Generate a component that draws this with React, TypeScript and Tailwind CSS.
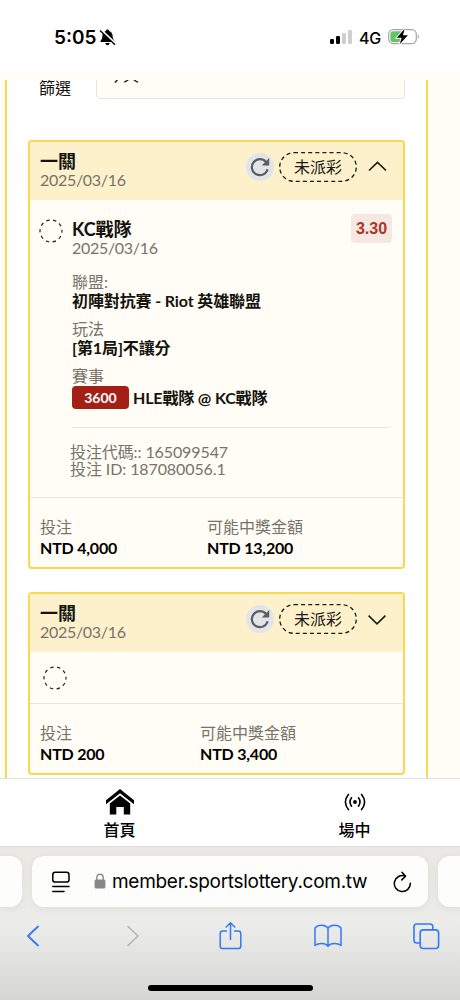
import React from "react";

const LATO = "font-['Lato','Noto_Sans_CJK_TC',sans-serif]";

function RefreshBadge() {
  return (
    <span className="flex h-[28px] w-[28px] items-center justify-center rounded-full bg-[#e3e4e7]">
      <svg width="20" height="20" viewBox="0 0 20 20" fill="none">
        <path d="M16 5A8 8 0 1 0 17.6 12.3" stroke="#5d5e61" strokeWidth="2.2" />
        <path d="M19.2 1V8.4H11.8Z" fill="#5d5e61" />
      </svg>
    </span>
  );
}

function PendingRing() {
  return (
    <svg className="shrink-0" width="24" height="24" viewBox="0 0 24 24" fill="none">
      <circle cx="12" cy="12" r="11" stroke="#222" strokeWidth="1.2" strokeDasharray="3.4 3.51" strokeDashoffset="1.7" />
    </svg>
  );
}

function StatusPill() {
  return (
    <span className="relative ml-[5px] flex h-[30px] w-[78px] items-center justify-center text-[16px] text-[#1b1a14]">
      <svg className="absolute inset-0" width="78" height="30" viewBox="0 0 78 30" fill="none">
        <rect x=".7" y=".7" width="76.6" height="28.6" rx="14.3" stroke="#1b1a14" strokeWidth="1.3" strokeDasharray="4 3.1" />
      </svg>
      未派彩
    </span>
  );
}

function CardHeader({ open }: { open: boolean }) {
  return (
    <div className="flex h-[58px] bg-[#fdf1cb] pl-[10px]">
      <div className="flex-1 pt-[9px]">
        <div className="h-[19px] text-[18px] leading-[20px] font-bold text-[#14130d]">一關</div>
        <div className="h-[20px] text-[16px] leading-[20px] tracking-[-0.3px] text-[#77736a]">2025/03/16</div>
      </div>
      <div className="mt-[10px] flex h-[30px] items-center pr-[16px]">
        <RefreshBadge />
        <StatusPill />
        <svg className="ml-[11px]" width="19" height="12" viewBox="0 0 19 12" fill="none" stroke="#1b1a14" strokeWidth="1.6">
          <path d={open ? "M1 9.5 9.5 1.3 18 9.5" : "M.6 2.6 9 10.8 17.4 2.6"} />
        </svg>
      </div>
    </div>
  );
}

function Stake({ left, right, leftWidth }: { left: string; right: string; leftWidth: string }) {
  return (
    <div className="flex h-[71px] border-t-[1.5px] border-[#e8e5df] pt-[18px] pl-[10px]">
      <div className={leftWidth}>
        <div className="h-[22px] text-[16px] leading-[22px] text-[#77736a]">投注</div>
        <div className="h-[21px] text-[16px] leading-[20px] font-bold tracking-[-0.2px] text-black">{left}</div>
      </div>
      <div>
        <div className="h-[22px] text-[16px] leading-[22px] text-[#77736a]">可能中獎金額</div>
        <div className="h-[21px] text-[16px] leading-[20px] font-bold tracking-[-0.2px] text-black">{right}</div>
      </div>
    </div>
  );
}

function StatusBar() {
  return (
    <div className="flex h-[71px] shrink-0 items-start bg-white pl-[54px] pr-[40px] pt-[25px] font-['Inter',sans-serif]">
      <span className="w-[42px] text-[19px] leading-[26px] font-semibold text-black">5:05</span>
      <svg className="mt-[4px] ml-[3px]" width="17" height="17" viewBox="0 0 17 17">
        <path d="M8.5 .5C9.4 .5 10 1.1 10.1 1.9 12.5 2.6 13.6 4.5 13.6 7 13.6 9.8 14.8 10.7 15.4 11.7 15.7 12.4 15.3 13 14.6 13H2.4C1.7 13 1.3 12.4 1.6 11.7 2.2 10.7 3.4 9.8 3.4 7 3.4 4.5 4.5 2.6 6.9 1.9 7 1.1 7.6 .5 8.5 .5ZM6.3 14H10.7C10.5 15.3 9.7 16.2 8.5 16.2S6.5 15.3 6.3 14Z" fill="#000" />
        <path d="M2.1 1.1 16.2 14.5" stroke="#fff" strokeWidth="2.4" />
        <path d="M1 1.5 16 15.7" stroke="#000" strokeWidth="1.4" />
      </svg>
      <div className="flex-1" />
      <svg className="mt-[5px]" width="23" height="15" viewBox="0 0 23 15">
        <rect x="0" y="9" width="4" height="5" rx="1.2" fill="#000" />
        <rect x="6" y="6" width="4" height="8" rx="1.2" fill="#000" />
        <rect x="12" y="3" width="4" height="11" rx="1.2" fill="#cfcfcf" />
        <rect x="18" y="0" width="4" height="14" rx="1.2" fill="#cfcfcf" />
      </svg>
      <span className="ml-[6px] text-[16px] leading-[26px] font-medium tracking-[-0.2px] text-black">4G</span>
      <svg className="mt-[3px] ml-[7px]" width="32" height="18" viewBox="0 0 32 18">
        <rect x=".7" y="1.7" width="27.6" height="14" rx="4.6" fill="#fff" stroke="#a5a5a5" strokeWidth="1.2" />
        <path d="M5.2 3.3H15V14.1H5.2A2.8 2.8 0 0 1 2.4 11.3V6.1A2.8 2.8 0 0 1 5.2 3.3Z" fill="#65c466" />
        <path d="M29.8 6.5C31.2 7 31.2 10.3 29.8 10.8Z" fill="#a5a5a5" />
        <path d="M16.6 .8 8.8 9.8H13.6L11.7 16.3 19.9 7.2H15Z" fill="#000" stroke="#fff" strokeWidth="1.8" paintOrder="stroke" />
      </svg>
    </div>
  );
}

function BetDetails() {
  return (
    <div className="flex h-[296.5px] pt-[19px] pl-[9px] pr-[11px]">
      <div><PendingRing /></div>
      <div className="ml-[9px] flex-1 text-[16px]">
        <div className="flex justify-between">
          <div>
            <div className="h-[19px] text-[18px] leading-[20px] font-bold text-[#14130d]">KC戰隊</div>
            <div className="h-[20px] leading-[19px] tracking-[-0.3px] text-[#77736a]">2025/03/16</div>
          </div>
          <div className="mt-[-5px] flex h-[29px] w-[41px] items-center justify-center rounded-[4px] bg-[#f5e8e0] pt-px font-bold text-[#ad3527] font-['Liberation_Sans',sans-serif]">3.30</div>
        </div>
        <div className="mt-[14px] h-[20px] leading-[20px] text-[#77736a]">聯盟:</div>
        <div className="h-[20px] leading-[18px] font-bold tracking-[-0.12px] text-[#14130d]">初陣對抗賽 - Riot 英雄聯盟</div>
        <div className="mt-[6px] h-[20px] leading-[21px] text-[#77736a]">玩法</div>
        <div className="h-[20px] leading-[20px] font-bold tracking-[-0.1px] text-[#14130d]">[第1局]不讓分</div>
        <div className="mt-[7px] h-[21px] leading-[21px] text-[#77736a]">賽事</div>
        <div className="flex h-[23px] items-center">
          <span className="mr-[4px] flex h-[23px] w-[57px] items-center justify-center rounded-[4px] bg-[#a32017] text-[14px] font-bold text-white">3600</span>
          <span className="font-bold tracking-[-0.15px] text-[#14130d]">HLE戰隊 @ KC戰隊</span>
        </div>
        <div className="mt-[18px] mr-[2px] border-t-[1.5px] border-[#e8e5df]" />
        <div className="mt-[15px] ml-[-2px] tracking-[-0.1px] text-[#77736a]">
          <div className="h-[17px] leading-[17px]">投注代碼:: 165099547</div>
          <div className="h-[17px] leading-[17px]">投注 ID: 187080056.1</div>
        </div>
      </div>
    </div>
  );
}

function BottomNav() {
  return (
    <div className={"flex h-[69px] shrink-0 border-y border-[#dfdfdf] bg-white pl-[2px] text-[16px] font-medium text-black " + LATO}>
      <div className="flex w-[235px] shrink-0 flex-col items-center pt-[10px]">
        <svg width="28" height="26" viewBox="0 0 28 26" fill="#000">
          <path d="M14 0 28 11.2V15.2L14 4.2 0 15.2V11.2Z" />
          <path d="M14 6.6 24.2 14.6V25.4H17.8V18H10.3V25.4H3.8V14.6Z" />
        </svg>
        <span className="mt-[4px] h-[22px] leading-[22px]">首頁</span>
      </div>
      <div className="flex w-[235px] shrink-0 flex-col items-center pt-[14px]">
        <svg width="22" height="18" viewBox="0 0 22 18" fill="none" stroke="#000" strokeWidth="1.6" strokeLinecap="round">
          <circle cx="11" cy="9" r="1.1" fill="#000" />
          <path d="M7.5 4.8Q4.5 9 7.5 13.2M14.5 4.8Q17.5 9 14.5 13.2M4.4 1.4Q-1.6 9 4.4 16.6M17.6 1.4Q23.6 9 17.6 16.6" />
        </svg>
        <span className="mt-[8px] h-[22px] leading-[22px]">場中</span>
      </div>
    </div>
  );
}

function BrowserBar() {
  return (
    <div className="flex h-[153px] shrink-0 flex-col overflow-hidden bg-linear-to-b from-[#e9e8e2] via-[#ececea] to-[#d6d6d5] pt-[9px]">
      <div className="flex h-[51px] shrink-0 gap-[10px]">
        <div className="w-[22px] shrink-0 rounded-r-[12px] bg-[#fdfdfc] shadow-[0_2px_8px_rgba(0,0,0,.06)]" />
        <div className="flex w-[396px] shrink-0 items-center rounded-[12px] bg-[#fdfdfc] pl-[20px] shadow-[0_2px_8px_rgba(0,0,0,.06)]">
          <svg className="shrink-0" width="18" height="22" viewBox="0 0 18 22" fill="none" stroke="#000" strokeWidth="1.5" strokeLinecap="round">
            <rect x=".8" y="1.3" width="16.2" height="9.8" rx="2.4" />
            <path d="M.8 15.6H17M.8 20.4H12" />
          </svg>
          <svg className="mt-[-1px] ml-[24px] shrink-0" width="12" height="16" viewBox="0 0 12 16">
            <rect x=".6" y="6.6" width="10.8" height="8.8" rx="1.5" fill="#87868b" />
            <path d="M2.8 7V4.4C2.8 .1 9.2 .1 9.2 4.4V7" fill="none" stroke="#87868b" strokeWidth="1.4" />
          </svg>
          <span className="ml-[6px] w-[256px] shrink-0 whitespace-nowrap font-['Inter',sans-serif] text-[19px] leading-[26px] tracking-[-0.29px] text-black">member.sportslottery.com.tw</span>
          <svg className="ml-[25px] shrink-0" width="19" height="22" viewBox="0 0 19 22" fill="none" stroke="#000" strokeWidth="1.5" strokeLinecap="round" strokeLinejoin="round">
            <path d="M17.3 12.2A8 8 0 1 1 12.2 5.1M9 1.3 12.6 5.2 8.8 8.9" />
          </svg>
        </div>
        <div className="w-[30px] shrink-0 rounded-l-[12px] bg-[#fdfdfc] shadow-[0_2px_8px_rgba(0,0,0,.06)]" />
      </div>
      <div className="mt-[14px] flex h-[30px] items-center pl-[26px] text-[#3478f6]">
        <svg width="14" height="22" viewBox="0 0 14 22" fill="none" stroke="currentColor" strokeWidth="1.8" strokeLinecap="round" strokeLinejoin="round">
          <path d="M12 1.5 2 11 12 20.5" />
        </svg>
        <svg className="ml-[86px]" width="14" height="22" viewBox="0 0 14 22" fill="none" stroke="#b5b5b3" strokeWidth="1.6" strokeLinecap="round" strokeLinejoin="round">
          <path d="M2 1.5 12 11 2 20.5" />
        </svg>
        <svg className="ml-[78.5px]" width="23" height="30" viewBox="0 0 23 30" fill="none" stroke="currentColor" strokeWidth="1.5" strokeLinecap="round" strokeLinejoin="round">
          <path d="M7.5 10H3.8A2.6 2.6 0 0 0 1.2 12.6V25A2.6 2.6 0 0 0 3.8 27.6H19.2A2.6 2.6 0 0 0 21.8 25V12.6A2.6 2.6 0 0 0 19.2 10H15.5M11.5 18.5V2M7.2 6 11.5 1.7 15.8 6" />
        </svg>
        <svg className="ml-[72px]" width="28" height="24" viewBox="0 0 28 24" fill="none" stroke="currentColor" strokeWidth="1.5" strokeLinecap="round" strokeLinejoin="round">
          <path d="M14 4.2V22.2M14 4.2C11.5 .4 4 .2 1 4V21.5C4 19 11.5 18.6 14 22.2 16.5 18.6 24 19 27 21.5V4C24 .2 16.5 .4 14 4.2Z" />
        </svg>
        <svg className="ml-[71px]" width="27" height="27" viewBox="0 0 27 27" fill="none" stroke="currentColor" strokeWidth="1.6" strokeLinejoin="round">
          <rect x="7.2" y="6.9" width="18.4" height="18.6" rx="3" />
          <path d="M7.2 20H3.8A2.8 2.8 0 0 1 1 17.2V3.8A2.8 2.8 0 0 1 3.8 1H17A2.8 2.8 0 0 1 19.8 3.8V6.9" />
        </svg>
      </div>
      <div className="mx-auto mt-[34px] h-[6px] w-[165px] rounded-full bg-black" />
    </div>
  );
}

export default function App() {
  return (
    <div className="flex h-[1000px] w-[460px] flex-col overflow-hidden bg-[#fffdf5]">
      <StatusBar />
      <div className="h-[9px] shrink-0 bg-[#fffdf5]" />
      <main className={"flex h-[698px] shrink-0 overflow-hidden pr-[32px] pl-[5px] " + LATO}>
        <div className="w-[423px] border-x-2 border-[#f9d951] bg-white">
          <div className="flex h-[19px] items-end">
            <span className="ml-[32px] h-[23px] w-[57px] text-[16px] leading-[23px] text-[#14130d]">篩選</span>
            <div className="flex h-[40px] w-[309px] items-end rounded-[4px] border-[1.5px] border-[#e8e5e1] bg-[#fffdf5] pb-[13px] pl-[10px] text-[16px] leading-[20px] text-[#14130d]">今天</div>
          </div>
          <section className="mt-[41px] mr-[21px] ml-[21px] h-[428.5px] overflow-hidden rounded-[4px] border-2 border-[#f9d951] bg-[#fffdf5]">
            <CardHeader open />
            <BetDetails />
            <Stake left="NTD 4,000" right="NTD 13,200" leftWidth="w-[167px]" />
          </section>
          <section className="mt-[23px] mr-[21px] ml-[21px] h-[183.5px] overflow-hidden rounded-[4px] border-2 border-[#f9d951] bg-[#fffdf5]">
            <CardHeader open={false} />
            <div className="h-[51px] pt-[14px] pl-[13px]"><PendingRing /></div>
            <Stake left="NTD 200" right="NTD 3,400" leftWidth="w-[160px]" />
          </section>
        </div>
      </main>
      <BottomNav />
      <BrowserBar />
    </div>
  );
}
